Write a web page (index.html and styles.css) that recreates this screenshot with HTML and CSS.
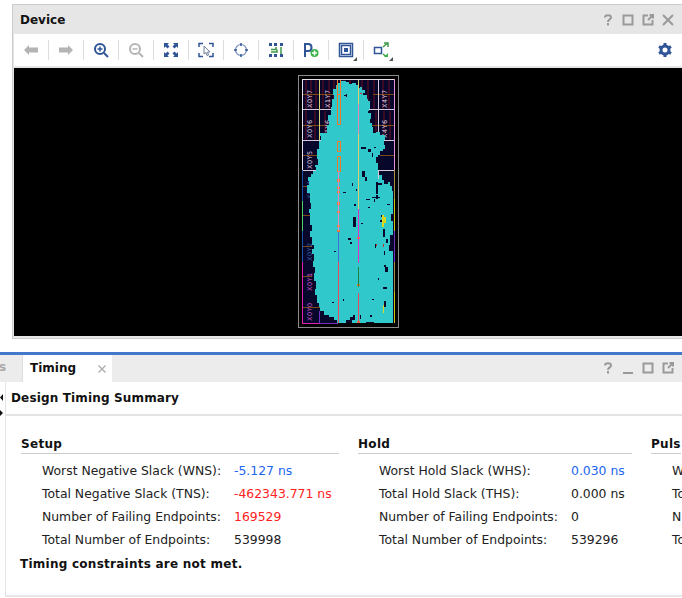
FILE: index.html
```html
<!DOCTYPE html>
<html lang="en">

<head>
    <meta charset="UTF-8">
    <meta name="viewport" content="width=device-width, initial-scale=1.0">
    <title>Device and Timing</title>

    <link rel="stylesheet" href="styles.css">
</head>

<body>

    <!-- Device panel -->
    <section class="device">
        <header class="device-title">
            <h2>Device</h2>
            <div class="win-icons">
                <span class="win-icon"><svg width="16" height="16" viewBox="0 0 16 16"><path d="M5 5.500C5 2.500 11 2.500 11 5.500C11 7.500 8 7.300 8 10" /><path d="M8 11v2.500" /></svg></span>
                <span class="win-icon"><svg width="16" height="16" viewBox="0 0 16 16"><rect x="3.500" y="3.500" width="9" height="9" /></svg></span>
                <span class="win-icon"><svg width="16" height="16" viewBox="0 0 16 16"><path d="M8 3.500H3.500V12.500H12.500V8" /><path d="M8 8L13 3M9.500 3H13V6.500" /></svg></span>
                <span class="win-icon"><svg width="16" height="16" viewBox="0 0 16 16"><path d="M3 3L13 13M13 3L3 13" /></svg></span>
            </div>
        </header>

        <div class="toolbar">
            <span class="tool"><svg width="16" height="16" viewBox="0 0 16 16"><path class="fill-off" d="M1 8L6 3V5.500H15V10.500H6V13Z" /></svg></span>
            <span class="tool"><svg width="16" height="16" viewBox="0 0 16 16"><path class="fill-off" d="M15 8L10 3V5.500H1V10.500H10V13Z" /></svg></span>
            <span class="tool"><svg width="16" height="16" viewBox="0 0 16 16"><circle class="line-blue" cx="7" cy="7" r="5" /><path class="line-blue thin" d="M4.500 7H9.500M7 4.500V9.500" /><path class="line-blue" d="M11 11L15 15" /></svg></span>
            <span class="tool"><svg width="16" height="16" viewBox="0 0 16 16"><circle class="line-off" cx="7" cy="7" r="5" /><path class="line-off thin" d="M4.500 7H9.500" /><path class="line-off" d="M11 11L15 15" /></svg></span>
            <span class="tool"><svg width="16" height="16" viewBox="0 0 16 16"><path class="fill-blue" d="M1 1H6L4.500 2.500L6.500 4.500L4.500 6.500L2.500 4.500L1 6ZM15 1V6L13.500 4.500L11.500 6.500L9.500 4.500L11.500 2.500L10 1ZM1 15V10L2.500 11.500L4.500 9.500L6.500 11.500L4.500 13.500L6 15ZM15 15H10L11.500 13.500L9.500 11.500L11.500 9.500L13.500 11.500L15 10Z" /></svg></span>
            <span class="tool"><svg width="16" height="16" viewBox="0 0 16 16"><path class="line-blue thin" d="M1 5V1.500H5M11 1.500H15V5M1 11V14.500H5M11 14.500H15V11" /><path class="line-grey" d="M6 4L12 10L9.500 10L10.500 13L9 13.500L8 10.500L6 12Z" /></svg></span>
            <span class="tool"><svg width="16" height="16" viewBox="0 0 16 16"><circle class="line-soft" cx="8" cy="8" r="5.500" /><path class="line-blue thin" d="M8 1V4M8 12V15M1 8H4M12 8H15" /></svg></span>
            <span class="tool"><svg width="16" height="16" viewBox="0 0 16 16"><path class="fill-blue" d="M1 1H4V4H1ZM6 1H9V4H6ZM12 1H15V4H12ZM1 12H4V15H1ZM6 12H9V15H6ZM12 12H15V15H12Z" /><path class="line-green" d="M3 7.500H8V5M3 10H9V7.500M13 5V12" /></svg></span>
            <span class="tool"><svg width="16" height="16" viewBox="0 0 16 16"><path class="line-blue" d="M2 15V2H5.500C9.500 2 9.500 9 5.500 9H2" /><circle class="fill-green" cx="11.500" cy="11" r="4" /><path class="line-white" d="M9 11H14M11.500 8.500V13.500" /></svg></span>
            <span class="tool tool-menu"><svg width="16" height="16" viewBox="0 0 16 16"><rect class="line-blue thin" x="1.500" y="1.500" width="13" height="13" /><rect class="line-blue thin" x="3.500" y="3.500" width="9" height="9" /><rect class="fill-blue" x="6" y="6" width="4" height="4" /></svg></span>
            <span class="tool tool-menu"><svg width="16" height="16" viewBox="0 0 16 16"><rect class="line-blue thin" x="1.500" y="5.500" width="7" height="6" /><path class="line-green" d="M10 5L14 1.500M11 1H15V5M10 12L13 14.500" /><path class="fill-green" d="M11 15H15V11Z" /></svg></span>
            <span class="tool tool-gear"><svg width="16" height="16" viewBox="0 0 16 16"><circle class="line-blue wide" cx="8" cy="8" r="4" /><path class="line-blue wide" d="M8 1V3M8 13V15M2 4.500L3.700 5.500M12.300 10.500L14 11.500M2 11.500L3.700 10.500M12.300 5.500L14 4.500" /></svg></span>
        </div>

        <!-- Floorplan -->
        <div class="canvas">
            <svg class="chip" width="102" height="254" viewBox="298 76 102 254">
                <rect class="chip-frame" x="298.500" y="76.500" width="100" height="252" />
                <rect class="chip-bg" x="302" y="80" width="92" height="244" />

                <path class="stripes" d="M306 81V110M311 81V110M316 81V110M323 81V110M329 81V110M334 81V110M344 81V90M350 81V88M362 81V110M368 81V110M374 81V110M383 81V110M389 81V110M306 112V141M315 112V141M325 112V135M376 112V141M384 112V141M390 112V141" />
                <path class="bars" d="M302 95H334M373 95H394M302 126H328M372 126H394M302 156H318M380 156H394M302 187H312M302 216H312M302 247H312M302 277H312M302 308H320" />

                <text class="chip-label" transform="translate(312 109) rotate(-90)">X0Y7</text>
                <text class="chip-label" transform="translate(330 109) rotate(-90)">X1Y7</text>
                <text class="chip-label" transform="translate(387 109) rotate(-90)">X4Y7</text>
                <text class="chip-label" transform="translate(312 139) rotate(-90)">X0Y6</text>
                <text class="chip-label" transform="translate(330 139) rotate(-90)">X1Y6</text>
                <text class="chip-label" transform="translate(387 139) rotate(-90)">X4Y6</text>
                <text class="chip-label" transform="translate(312 170) rotate(-90)">X0Y5</text>
                <text class="chip-label label-blue" transform="translate(312 200) rotate(-90)">X0Y4</text>
                <text class="chip-label label-blue" transform="translate(312 262) rotate(-90)">X0Y2</text>
                <text class="chip-label label-pink" transform="translate(312 292) rotate(-90)">X0Y1</text>
                <text class="chip-label label-pink" transform="translate(312 322) rotate(-90)">X0Y0</text>

                <path class="grid-light" d="M302 110.500H394M302 141.500H394M302 171.500H319M378 171.500H394M319.500 80V141M378.500 80V141M378.500 171V180" />

                <polygon class="blob" points="338,84 341,84 341,82 346,82 346,83 349,83 349,85 352,85 352,84 356,84 356,86 359,86 359,89 360,89 360,88 362,88 362,91 365,91 365,94 364,94 364,96 367,96 367,100 368,100 368,102 370,102 370,110 369,110 369,114 371,114 371,120 370,120 370,124 372,124 372,128 373,128 373,134 376,134 376,133 380,133 380,136 385,136 385,141 384,141 384,146 385,146 385,150 383,150 383,152 380,152 380,156 378,156 378,158 376,158 376,164 378,164 378,180 379,180 379,176 382,176 382,181 384,181 384,185 388,185 388,183 390,183 390,187 392,187 392,192 393,192 393,215 391,215 391,222 393,222 393,246 389,246 389,252 393,252 393,324 374,324 374,323 366,323 366,324 352,324 352,321 346,321 346,324 337,324 337,321 334,321 334,318 329,318 329,316 324,316 324,312 320,312 320,308 319,308 319,304 317,304 317,296 315,296 315,290 316,290 316,282 314,282 314,274 315,274 315,268 313,268 313,262 314,262 314,255 312,255 312,250 314,250 314,246 312,246 312,238 310,238 310,232 312,232 312,226 310,226 310,214 309,214 309,210 311,210 311,204 310,204 310,194 307,194 307,186 309,186 309,182 308,182 308,178 311,178 311,175 313,175 313,172 316,172 316,168 315,168 315,166 318,166 318,160 317,160 317,150 319,150 319,142 321,142 321,137 320,137 320,134 327,134 327,126 329,126 329,122 328,122 328,116 331,116 331,108 332,108 332,100 334,100 334,96 333,96 333,90 336,90 336,86 338,86" />

                <path class="specks" d="M344 96h3v1h-3zM346 95h1v3h-1zM363 94h2v2h-2zM368 112h1v2h-1zM361 148h5v2h-5zM368 150h3v3h-3zM372 154h1v4h-1zM374 148h2v1h-2zM362 172h3v6h-3zM365 178h2v4h-2zM352 184h1v3h-1zM343 193h3v1h-3zM356 190h1v2h-1zM376 183h2v12h-2zM378 184h4v2h-4zM376 196h2v4h-2zM366 200h4v1h-4zM354 205h2v2h-2zM372 198h8v1h-8zM374 200h1v3h-1zM353 218h3v10h-3zM361 224h2v1h-2zM348 239h3v2h-3zM350 243h2v2h-2zM334 252h2v1h-2zM381 216h3v2h-3zM380 221h5v2h-5zM383 230h2v8h-2zM390 236h3v10h-3zM386 240h2v4h-2zM375 245h1v4h-1zM384 266h2v2h-2zM385 268h3v5h-3zM383 288h4v2h-4zM384 302h2v6h-2zM350 318h4v3h-4zM353 316h2v5h-2zM343 300h1v2h-1zM332 303h2v1h-2zM384 252h1v4h-1zM378 279h1v2h-1zM360 316h1v4h-1zM370 316h2v2h-2zM368 208h2v1h-2zM387 205h3v1h-3zM372 300h2v1h-2z" />
                <path class="specks-yellow" d="M382 216h2v12h-2zM384 218h2v6h-2zM383 306h1v8h-1z" />
                <path class="specks-red" d="M360 94h2v1h-2zM383 245h1v3h-1zM376 245h1v2h-1z" />

                <path class="v-orange" d="M337.500 80V125H340.500V80ZM337.500 95H340.500M337.500 142V152H340.500V142ZM337.500 157V172H340.500V157Z" />
                <path class="dots" d="M337 180h3v3h-3zM337 188h3v2h-3zM337 192h3v2h-3zM337 203h3v3h-3zM337 212h3v2h-3zM337 226h3v2h-3zM337 231h3v2h-3zM357 238h3v2h-3zM357 285h3v2h-3zM357 322h3v2h-3z" />
                <path class="v-yellow" d="M319.500 80V141M358.500 80V105M358.500 135V210" />
                <path class="v-pink" d="M338.500 172V232M358.500 105V135" />
                <path class="v-blue" d="M338.500 233V263" />
                <path class="v-red" d="M338.500 263V324M358.500 294V324" />
                <path class="v-magenta" d="M358.500 210V264" />
                <path class="v-green" d="M358.500 268V288" />

                <path class="edge-white" d="M302 80.500H394M302.500 80V171" />
                <path class="edge-pink" d="M394.500 80V171" />
                <path class="edge-blue" d="M302.500 171V202M302.500 232V263" />
                <path class="edge-green" d="M302.500 202V232" />
                <path class="edge-magenta" d="M302.500 263V324.500H319" />
                <path class="edge-purple" d="M319 324.500H338M319.500 324V312M394.500 232V263" />
                <path class="edge-yellow" d="M394.500 200V232M394.500 293V324" />
                <path class="edge-tan" d="M394.500 171V200M394.500 263V293" />
            </svg>
        </div>
    </section>

    <!-- Timing panel -->
    <section class="timing">
        <div class="tab-bar">
            <span class="tab-prev">s</span>
            <div class="tab">
                <span>Timing</span>
                <svg width="10" height="10" viewBox="0 0 10 10"><path d="M1.500 1.500L8.500 8.500M8.500 1.500L1.500 8.500" /></svg>
            </div>
            <div class="win-icons">
                <span class="win-icon"><svg width="16" height="16" viewBox="0 0 16 16"><path d="M5 5.500C5 2.500 11 2.500 11 5.500C11 7.500 8 7.300 8 10" /><path d="M8 11v2.500" /></svg></span>
                <span class="win-icon"><svg width="16" height="16" viewBox="0 0 16 16"><path d="M3 13H13" /></svg></span>
                <span class="win-icon"><svg width="16" height="16" viewBox="0 0 16 16"><rect x="3.500" y="3.500" width="9" height="9" /></svg></span>
                <span class="win-icon"><svg width="16" height="16" viewBox="0 0 16 16"><path d="M8 3.500H3.500V12.500H12.500V8" /><path d="M8 8L13 3M9.500 3H13V6.500" /></svg></span>
            </div>
        </div>

        <svg class="splitter" width="4" height="22" viewBox="0 0 4 22"><path d="M3 0V7L0 3.500ZM0 16V22L3 19Z" /></svg>

        <div class="report">
            <h3 class="report-title">Design Timing Summary</h3>

            <div class="summary">
                <div class="group">
                    <h4>Setup</h4>
                    <div class="row"><span class="name">Worst Negative Slack (WNS):</span><span class="good">-5.127 ns</span></div>
                    <div class="row"><span class="name">Total Negative Slack (TNS):</span><span class="bad">-462343.771 ns</span></div>
                    <div class="row"><span class="name">Number of Failing Endpoints:</span><span class="bad">169529</span></div>
                    <div class="row"><span class="name">Total Number of Endpoints:</span><span>539998</span></div>
                </div>
                <div class="group">
                    <h4>Hold</h4>
                    <div class="row"><span class="name">Worst Hold Slack (WHS):</span><span class="good">0.030 ns</span></div>
                    <div class="row"><span class="name">Total Hold Slack (THS):</span><span>0.000 ns</span></div>
                    <div class="row"><span class="name">Number of Failing Endpoints:</span><span>0</span></div>
                    <div class="row"><span class="name">Total Number of Endpoints:</span><span>539296</span></div>
                </div>
                <div class="group">
                    <h4>Puls</h4>
                    <div class="row"><span class="name">W</span></div>
                    <div class="row"><span class="name">To</span></div>
                    <div class="row"><span class="name">N</span></div>
                    <div class="row"><span class="name">To</span></div>
                </div>
            </div>

            <p class="verdict">Timing constraints are not met.</p>
        </div>
    </section>

</body>

</html>
```

FILE: styles.css
```css
* {
    font-family: 'DejaVu Sans', sans-serif;
    box-sizing: border-box;
}

html,
body {
    width: 682px;
    height: 598px;
    margin: 0;
    overflow: hidden;
    font-size: 12px;
    color: #222;
    background: white;
}

h2,
h3,
h4,
p {
    margin: 0;
    font-size: 12px;
}

/* Device panel */

.device {
    margin: 4px 0 13px 12px;
    height: 335px;
    border: 1px solid #ccc;
    border-width: 1px 0 1px 1px;
    background: #e6e6e6;
    padding: 0 0 2px 1px;
    display: flex;
    flex-direction: column;
}

.device-title {
    height: 29px;
    flex: none;
    margin-left: -1px;
    padding-left: 7px;
    display: flex;
    align-items: center;
    justify-content: space-between;
}

.device-title h2 {
    color: #111;
}

.win-icons {
    display: flex;
    padding-right: 4px;
}

.win-icon {
    width: 20px;
    height: 20px;
    display: flex;
    align-items: center;
    justify-content: center;
}

.win-icon svg,
.tab svg {
    fill: none;
    stroke: #999;
    stroke-width: 2;
}

.toolbar {
    height: 32px;
    flex: none;
    margin-bottom: 2px;
    background: white;
    display: flex;
    align-items: center;
}

.tool {
    position: relative;
    width: 35px;
    height: 20px;
    padding-right: 1px;
    border-right: 1px solid #ddd;
    display: flex;
    align-items: center;
    justify-content: center;
}

.tool-menu::after {
    content: '';
    position: absolute;
    right: 6px;
    bottom: -1px;
    border: 2.500px solid transparent;
    border-right-color: #555;
    border-bottom-color: #555;
}

.tool:nth-child(11) {
    border-right: none;
}

.tool-gear {
    margin-left: auto;
    border: none;
    width: 34px;
    padding: 0;
}

.fill-off {
    fill: #b4b4b4;
}

.fill-blue {
    fill: #2f5597;
}

.fill-green {
    fill: #3cb34a;
}

.line-blue,
.line-off,
.line-soft,
.line-green,
.line-white,
.line-grey {
    fill: none;
    stroke-width: 2;
}

.line-blue {
    stroke: #2f5597;
}

.line-off {
    stroke: #b4b4b4;
}

.line-soft {
    stroke: #6e88b8;
    stroke-width: 1.200;
}

.line-green {
    stroke: #3c9a48;
    stroke-width: 1.500;
}

.line-white {
    stroke: white;
    stroke-width: 1.500;
}

.line-grey {
    stroke: #6f7f9a;
    stroke-width: 1;
}

.thin {
    stroke-width: 1.500;
}

.wide {
    stroke-width: 3;
}

/* Floorplan */

.canvas {
    flex: 1;
    padding-left: 2px;
    background: black;
    display: flex;
    align-items: center;
    justify-content: center;
}

.chip {
    display: block;
}

.chip path,
.chip rect,
.chip polygon {
    shape-rendering: crispEdges;
}

.chip-frame {
    fill: none;
    stroke: #8a8a8a;
}

.chip-bg {
    fill: #07072c;
}

.stripes {
    fill: none;
    stroke: #3a0a24;
    stroke-width: 2;
}

.bars {
    fill: none;
    stroke: #7a4a12;
}

.chip-label {
    font-size: 6.500px;
    letter-spacing: 0.500px;
    fill: #e0d0e0;
}

.label-blue {
    fill: #3b63a8;
}

.label-pink {
    fill: #d65ad0;
}

.grid-light {
    fill: none;
    stroke: #d8c8d8;
}

.blob {
    fill: #30c8ca;
}

.specks {
    fill: #07072c;
}

.specks-yellow {
    fill: #d8d820;
}

.specks-red {
    fill: #c83030;
}

.dots {
    fill: #f07a28;
}

.v-orange,
.v-yellow,
.v-pink,
.v-blue,
.v-red,
.v-magenta,
.v-green,
.edge-white,
.edge-pink,
.edge-blue,
.edge-green,
.edge-magenta,
.edge-purple,
.edge-yellow,
.edge-tan {
    fill: none;
}

.v-orange {
    stroke: #f07a28;
}

.v-yellow {
    stroke: #d8d070;
}

.v-pink {
    stroke: #e088b8;
}

.v-blue {
    stroke: #4a6ad0;
}

.v-red {
    stroke: #e84860;
}

.v-magenta {
    stroke: #e030c8;
}

.v-green {
    stroke: #208040;
}

.edge-white {
    stroke: #e8e0e8;
}

.edge-pink {
    stroke: #e090d8;
}

.edge-blue {
    stroke: #2050b0;
}

.edge-green {
    stroke: #50d070;
}

.edge-magenta {
    stroke: #e020b0;
}

.edge-purple {
    stroke: #7030c0;
}

.edge-yellow {
    stroke: #c8c810;
}

.edge-tan {
    stroke: #a89040;
}

/* Timing panel */

.timing {
    position: relative;
    height: 246px;
    border-top: 3px solid #4478cc;
}

.tab-bar {
    height: 27px;
    background: #ececec;
    display: flex;
    align-items: center;
}

.tab-prev {
    width: 23px;
    color: #aaa;
    font-weight: bold;
    flex: none;
    border-right: 1px solid #ddd;
    height: 100%;
    line-height: 25px;
    text-indent: -1px;
}

.tab {
    width: 89px;
    height: 100%;
    padding: 0 5px 2px 7px;
    background: white;
    font-weight: bold;
    color: #111;
    display: flex;
    align-items: center;
    justify-content: space-between;
}

.tab svg {
    stroke-width: 1.300;
    stroke: #aaa;
    margin-top: 3px;
}

.tab-bar .win-icons {
    margin-left: auto;
    margin-top: -2px;
}

.splitter {
    position: absolute;
    left: 0;
    top: 39px;
    fill: #111;
}

.report {
    margin-left: 5px;
    height: 215px;
    border-left: 1px solid #e4e4e4;
    border-bottom: 2px solid #e8e8e8;
}

.report-title {
    height: 34px;
    padding: 0 0 2px 5px;
    border-bottom: 2px solid #e4e4e4;
    line-height: 32px;
    letter-spacing: 0.150px;
    color: #111;
}

.summary {
    display: grid;
    grid-template-columns: 318px 274px 30px;
    column-gap: 19px;
    padding: 21px 0 0 15px;
    white-space: nowrap;
}

.group h4 {
    height: 17px;
    line-height: 15px;
    margin-bottom: 5px;
    border-bottom: 1px solid #ccc;
    letter-spacing: 0.300px;
    color: #111;
}

.row {
    height: 23px;
    line-height: 23px;
    padding-left: 21px;
    font-size: 12.400px;
    display: flex;
}

.name {
    width: 192px;
    flex: none;
}

.good {
    color: #2266ee;
}

.bad {
    color: #f22;
}

.verdict {
    margin: 0 0 0 14px;
    padding-top: 6px;
    font-weight: bold;
    letter-spacing: 0.250px;
    color: #111;
}
```
